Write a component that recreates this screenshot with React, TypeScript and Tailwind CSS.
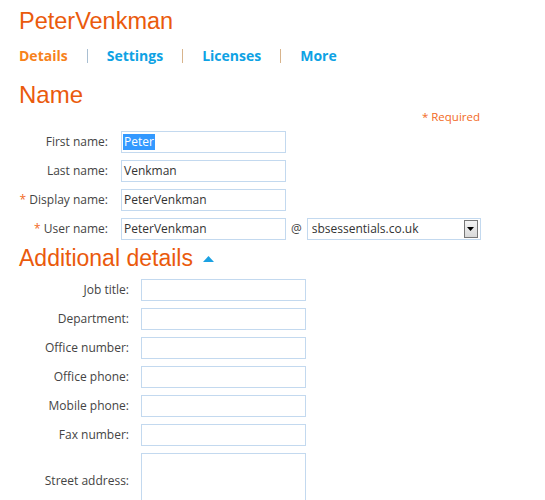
import React from "react";

const LABEL = "shrink-0 text-right text-[12px] leading-[16px] text-[#444]";
const BOX =
  "h-[22px] w-[165px] shrink-0 border border-[#c3d9ef] bg-white pl-[1px] text-[12px] leading-[20px] text-[#333]";
const REQ = "text-[#f26a24]";

const nameRows = [
  { label: "First name:", value: "Peter", selected: true },
  { label: "Last name:", value: "Venkman" },
  { label: "Display name:", value: "PeterVenkman", required: true },
];

const extraRows = [
  "Job title:",
  "Department:",
  "Office number:",
  "Office phone:",
  "Mobile phone:",
  "Fax number:",
];

export default function App() {
  return (
    <div className="h-[500px] w-[545px] overflow-hidden bg-white pl-[19px] pt-[7px] font-['Open_Sans','Noto_Sans',sans-serif]">
      <h1 className="font-['Liberation_Sans',Arial,sans-serif] text-[23.5px] leading-[28px] text-[#ea5a0c]">
        PeterVenkman
      </h1>

      {/* tabs */}
      <nav className="mt-[11px] flex items-center gap-[19px] text-[14px] font-bold leading-[20px]">
        <span className="text-[#f7821b]">Details</span>
        <span className="h-[14px] w-px bg-[#a9bfd2]" />
        <span className="text-[#0ea2e4]">Settings</span>
        <span className="h-[14px] w-px bg-[#d8b48c]" />
        <span className="text-[#0ea2e4]">Licenses</span>
        <span className="h-[14px] w-px bg-[#d8b48c]" />
        <span className="text-[#0ea2e4]">More</span>
      </nav>

      <h2 className="mt-[15px] font-['Liberation_Sans',Arial,sans-serif] text-[24px] leading-[28px] text-[#ea5a0c]">
        Name
      </h2>
      <div className="w-[461px] text-right text-[11.5px] leading-[16px] text-[#f26a24]">
        * Required
      </div>

      <div className="mt-[6px] flex flex-col gap-[7px]">
        {nameRows.map((r) => (
          <div key={r.label} className="flex items-center">
            <span className={`${LABEL} w-[89px]`}>
              {r.required && <span className={REQ}>* </span>}
              {r.label}
            </span>
            <div className={`${BOX} ml-[13px] flex items-center`}>
              {r.selected ? (
                <span className="bg-[#3399ff] pl-px pr-[1px] leading-[16px] text-white">
                  {r.value}
                </span>
              ) : (
                <span className="pl-[1px] leading-[16px]">{r.value}</span>
              )}
            </div>
          </div>
        ))}
        <div className="flex items-center">
          <span className={`${LABEL} w-[89px]`}>
            <span className={REQ}>* </span>User name:
          </span>
          <div className={`${BOX} ml-[13px] flex items-center`}>
            <span className="pl-[1px] leading-[16px]">PeterVenkman</span>
          </div>
          <span className="ml-[5px] text-[12px] leading-[16px] text-[#444]">@</span>
          <div className="ml-[5px] flex h-[22px] w-[174px] items-center justify-between border border-[#c3d9ef] bg-white pl-[4px] pr-[2px] text-[12px] leading-[16px] text-[#333]">
            <span>sbsessentials.co.uk</span>
            <span className="flex h-[18px] w-[14px] items-center justify-center border border-[#777] bg-gradient-to-b from-[#f4f4f4] to-[#d9d9d9]">
              <svg width="7" height="4" viewBox="0 0 7 4">
                <path d="M0 0h7L3.5 4z" fill="#000" />
              </svg>
            </span>
          </div>
        </div>
      </div>

      <div className="mt-[4px] flex items-end">
        <h2 className="font-['Liberation_Sans',Arial,sans-serif] text-[23px] leading-[28px] text-[#ea5a0c]">
          Additional details
        </h2>
        <svg className="mb-[10px] ml-[10px]" width="11" height="6" viewBox="0 0 11 6">
          <path d="M5.5 0L11 6H0z" fill="#1ba1e2" />
        </svg>
      </div>

      <div className="mt-[7px] flex flex-col gap-[7px]">
        {extraRows.map((label) => (
          <div key={label} className="flex items-center">
            <span className={`${LABEL} w-[110px]`}>{label}</span>
            <div className={`${BOX} ml-[12px]`} />
          </div>
        ))}
        <div className="flex items-center">
          <span className={`${LABEL} w-[110px]`}>Street address:</span>
          <div className="ml-[12px] h-[56px] w-[165px] shrink-0 border border-[#c3d9ef] bg-white" />
        </div>
      </div>
    </div>
  );
}
